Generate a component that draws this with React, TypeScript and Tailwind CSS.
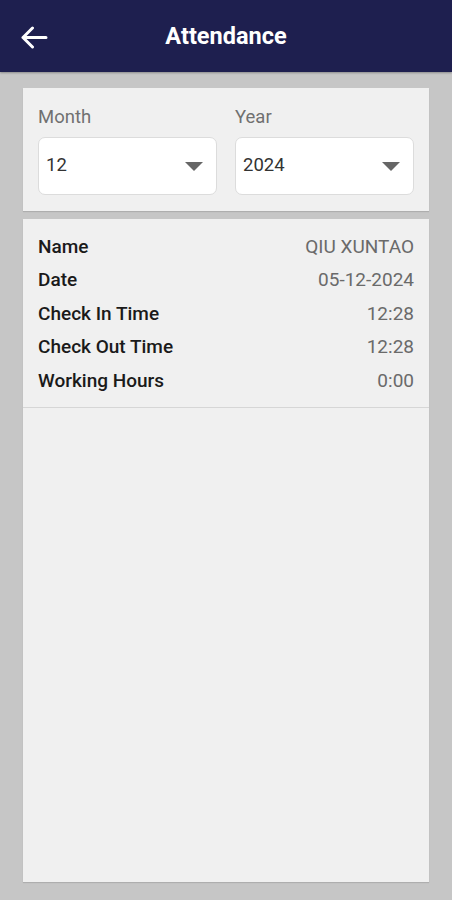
import React from "react";

const rows = [
  { label: "Name", value: "QIU XUNTAO" },
  { label: "Date", value: "05-12-2024" },
  { label: "Check In Time", value: "12:28" },
  { label: "Check Out Time", value: "12:28" },
  { label: "Working Hours", value: "0:00" },
];

const Select = ({ value }: { value: string }) => (
  <div className="h-[58px] flex items-center justify-between bg-white border border-[#dcdcdc] rounded-[7px] pl-[7px] pr-[13px]">
    <span className="text-[18.5px] text-[#333]">{value}</span>
    <svg width="18" height="9" viewBox="0 0 18 9">
      <path d="M0 0 H18 L9 9 Z" fill="#666" />
    </svg>
  </div>
);

export default function App() {
  return (
    <div className="w-[452px] h-[900px] flex flex-col bg-[#c6c6c6] font-['Roboto',sans-serif]">
      <div className="h-[72px] shrink-0 bg-[#1e1f4f] relative flex items-center justify-center shadow-[0_1px_2px_rgba(0,0,0,0.3)]">
        <button className="absolute left-[20px] top-[26px]">
          <svg width="28" height="23" viewBox="0 0 28 23" fill="none" stroke="white" strokeWidth="3" strokeLinecap="round" strokeLinejoin="round">
            <path d="M26 11.5 H3 M12.5 2 L3 11.5 L12.5 21" />
          </svg>
        </button>
        <h1 className="text-white text-[23.5px] font-bold mt-[2px]">Attendance</h1>
      </div>

      <div className="flex-1 flex flex-col px-[23px] pt-[16px] pb-[18px] gap-[8px]">
        <div className="bg-[#f0f0f0] px-[15px] pt-[18px] pb-[16px] shadow-[0_1px_1px_rgba(0,0,0,0.12)] grid grid-cols-2 gap-x-[18px]">
          <div className="flex flex-col gap-[9px]">
            <span className="text-[18.5px] text-[#707070] leading-[22px]">Month</span>
            <Select value="12" />
          </div>
          <div className="flex flex-col gap-[9px]">
            <span className="text-[18.5px] text-[#707070] leading-[22px]">Year</span>
            <Select value="2024" />
          </div>
        </div>

        <div className="flex-1 flex flex-col bg-[#f0f0f0] shadow-[0_1px_1px_rgba(0,0,0,0.12)]">
          <div className="flex flex-col px-[15px] pt-[11px] pb-[9px] border-b border-[#d6d6d6]">
            {rows.map((r) => (
              <div key={r.label} className="h-[33.5px] flex items-center justify-between text-[19px]">
                <span className="text-[#1a1a1a] font-medium">{r.label}</span>
                <span className="text-[#6a6a6a]">{r.value}</span>
              </div>
            ))}
          </div>
        </div>
      </div>
    </div>
  );
}
